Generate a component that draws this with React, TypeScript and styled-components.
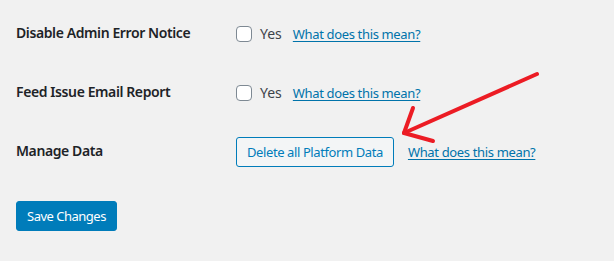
import styled, { createGlobalStyle } from "styled-components";

const GlobalStyle = createGlobalStyle`
  html, body {
    margin: 0;
    padding: 0;
    background: #f1f1f1;
  }
  body {
    font-family: "Noto Sans", "Liberation Sans", sans-serif;
    color: #1d2327;
    font-size: 13px;
  }
`;

const Page = styled.div`
  position: relative;
  width: 614px;
  height: 261px;
  padding: 4px 0 0 16px;
  box-sizing: border-box;
  overflow: hidden;
`;

const FormTable = styled.table`
  border-collapse: collapse;
`;

const Row = styled.tr`
  height: 59px;
`;

const Label = styled.th`
  width: 200px;
  padding: 0 10px 0 0;
  text-align: left;
  vertical-align: middle;
  font-size: 14px;
  font-weight: 600;
  letter-spacing: -0.4px;
  line-height: 1.3;
`;

const Field = styled.td`
  padding: 0 10px;
  vertical-align: middle;
`;

const Inline = styled.div<{ $gap: number }>`
  display: flex;
  align-items: center;
  gap: ${(p) => p.$gap}px;
`;

const CheckLabel = styled.label`
  display: flex;
  align-items: center;
  gap: 8px;
  font-size: 14px;
  color: #3c434a;
`;

const Checkbox = styled.input.attrs({ type: "checkbox" })`
  appearance: none;
  margin: 0;
  width: 16px;
  height: 16px;
  border: 1px solid #7e8993;
  border-radius: 4px;
  background: #fff;
  box-sizing: border-box;
`;

const HelpLink = styled.a`
  color: #0073aa;
  font-size: 13px;
  letter-spacing: -0.35px;
  text-decoration: underline;
  text-underline-offset: 2px;
`;

const Button = styled.button<{ $primary?: boolean }>`
  height: 30px;
  padding: 0 10px;
  border-radius: 3px;
  font-family: inherit;
  font-size: 13px;
  letter-spacing: ${(p) => (p.$primary ? "-0.5px" : "-0.4px")};
  line-height: 28px;
  border: 1px solid #007cba;
  color: ${(p) => (p.$primary ? "#fff" : "#007cba")};
  background: ${(p) => (p.$primary ? "#007cba" : "#f3f5f6")};
  cursor: pointer;
`;

const Submit = styled.p`
  margin: 20px 0 0;
`;

const Arrow = styled.svg`
  position: absolute;
  left: 0;
  top: 0;
  pointer-events: none;
`;

export default function App() {
  return (
    <Page>
      <GlobalStyle />
      <FormTable>
        <tbody>
          <Row>
            <Label>Disable Admin Error Notice</Label>
            <Field>
              <Inline $gap={11}>
                <CheckLabel>
                  <Checkbox />
                  Yes
                </CheckLabel>
                <HelpLink href="#">What does this mean?</HelpLink>
              </Inline>
            </Field>
          </Row>
          <Row>
            <Label>Feed Issue Email Report</Label>
            <Field>
              <Inline $gap={11}>
                <CheckLabel>
                  <Checkbox />
                  Yes
                </CheckLabel>
                <HelpLink href="#">What does this mean?</HelpLink>
              </Inline>
            </Field>
          </Row>
          <Row>
            <Label>Manage Data</Label>
            <Field>
              <Inline $gap={14}>
                <Button type="button">Delete all Platform Data</Button>
                <HelpLink href="#">What does this mean?</HelpLink>
              </Inline>
            </Field>
          </Row>
        </tbody>
      </FormTable>
      <Submit>
        <Button type="button" $primary>
          Save Changes
        </Button>
      </Submit>
      <Arrow width="614" height="261" viewBox="0 0 614 261">
        <g stroke="#ec1c24" strokeWidth="4" strokeLinecap="round" fill="none">
          <line x1="537" y1="74" x2="404" y2="133" />
          <line x1="404" y1="133" x2="413" y2="108" />
          <line x1="404" y1="133" x2="433" y2="141" />
        </g>
      </Arrow>
    </Page>
  );
}
